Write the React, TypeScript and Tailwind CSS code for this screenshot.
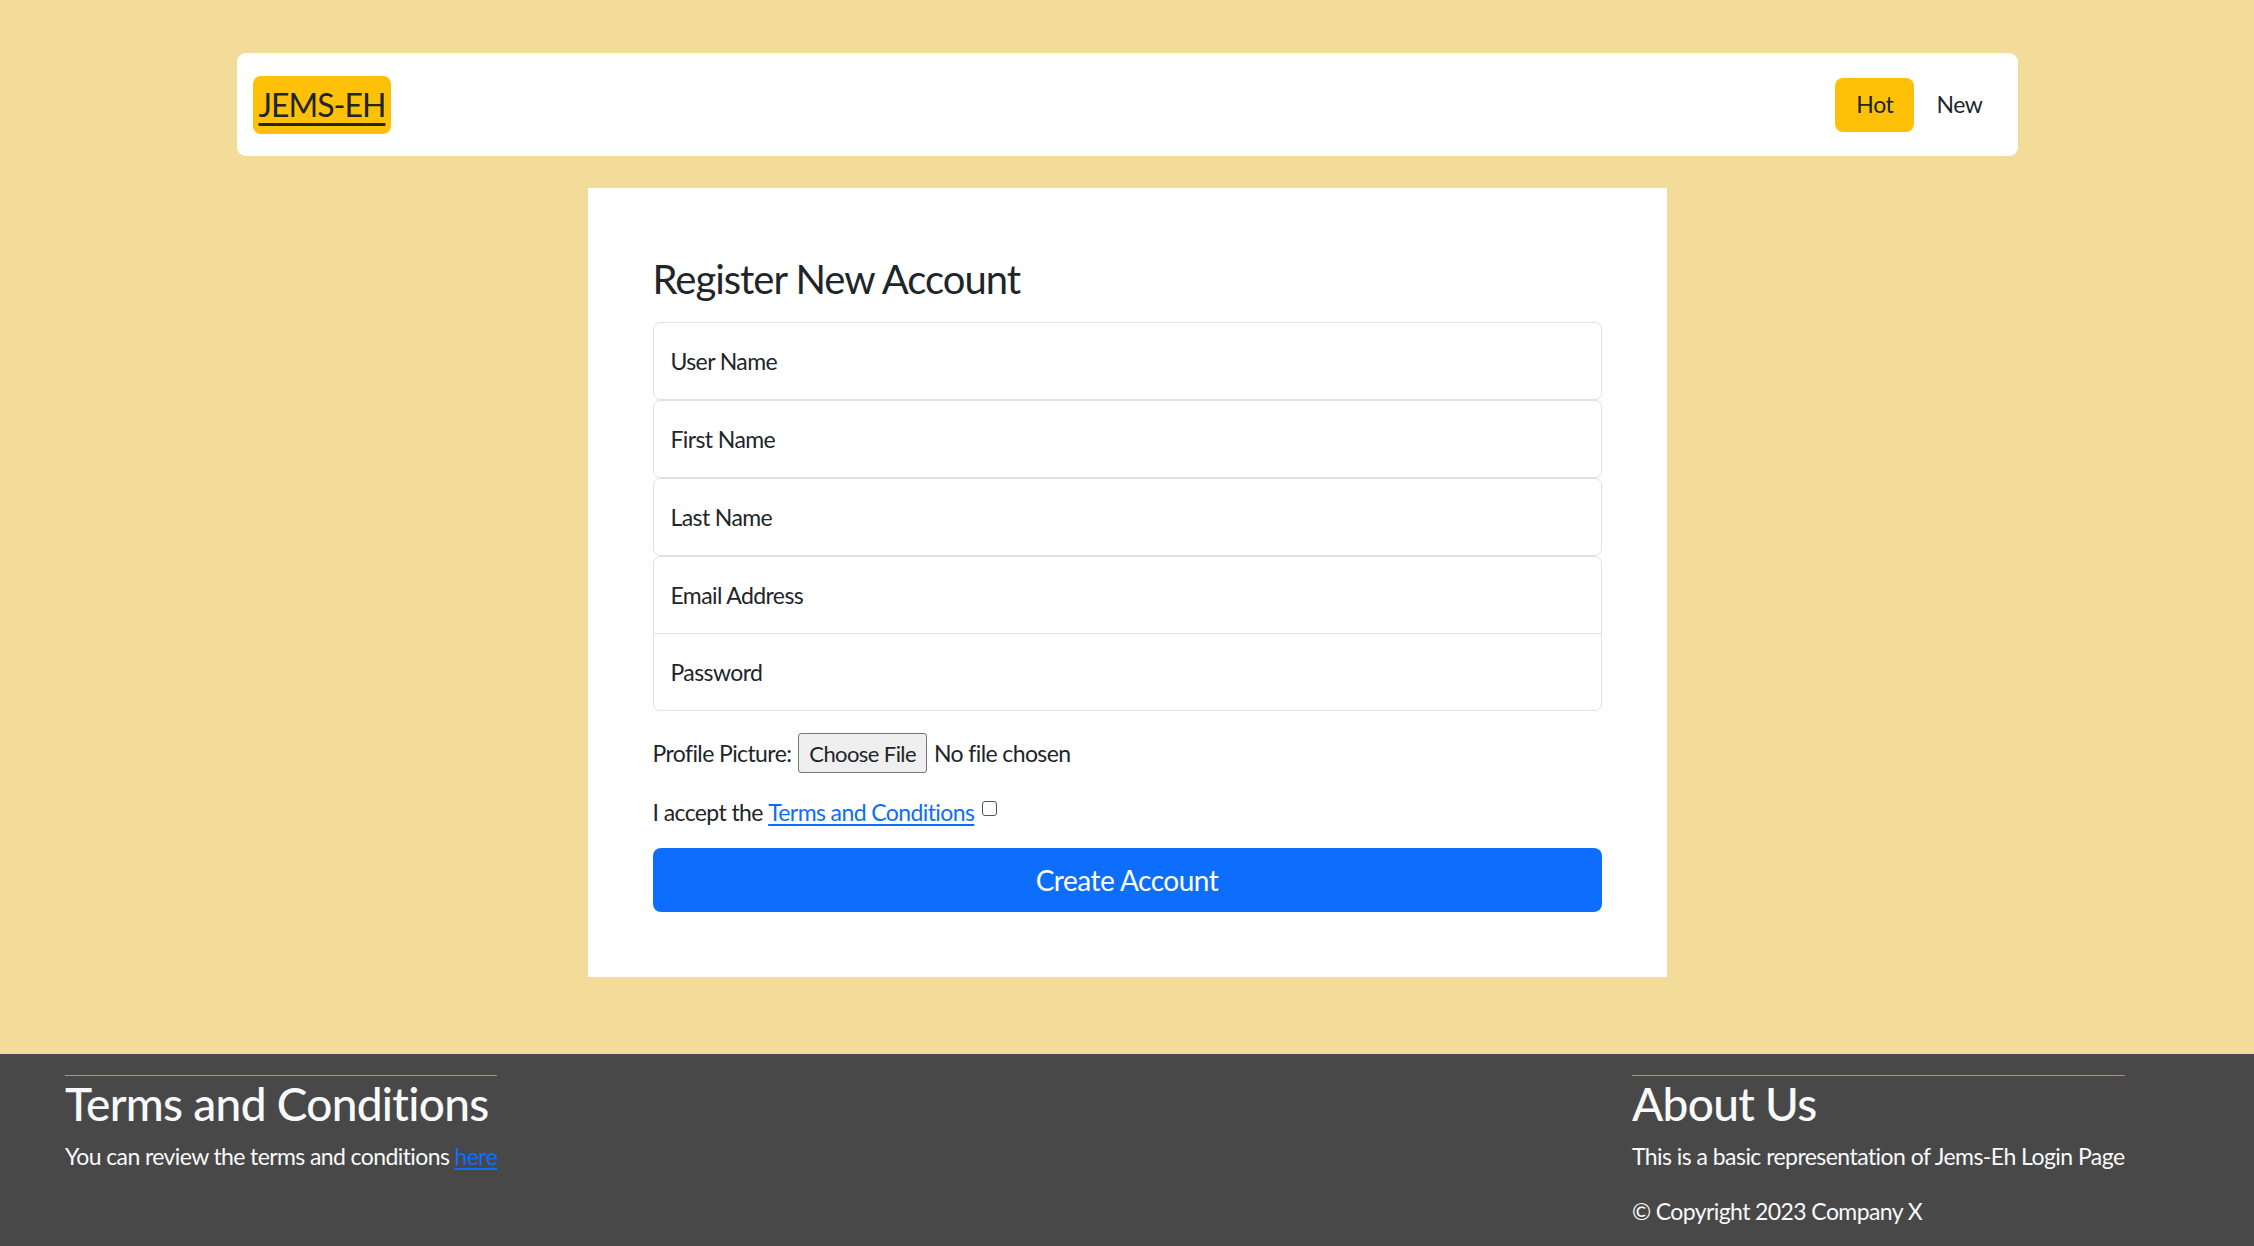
import React from "react";

const font = "font-['Lato',sans-serif]";

function Field({ label, className }: { label: string; className: string }) {
  return (
    <div className={`h-[78px] border border-[#dee2e6] bg-white flex items-center px-[17px] text-[23px] tracking-[-0.6px] text-[#212529] ${className}`}>
      {label}
    </div>
  );
}

export default function App() {
  return (
    <div className={`${font} min-h-screen flex flex-col bg-[#f3dc9a] text-[#212529]`}>
      <main className="flex-1 pt-[53px] pb-[77px]">
        <nav className="mx-auto w-[1781px] h-[103px] bg-white rounded-[9px] flex items-center justify-between pl-[16px] pr-[35px]">
          <a href="#" className="h-[58px] px-[6px] bg-[#ffc107] rounded-[8px] flex items-center text-[32px] tracking-[-1px] text-[#212529] underline decoration-[3px] underline-offset-[6px]">
            JEMS-EH
          </a>
          <div className="flex items-center gap-[22px] text-[23px] tracking-[-0.4px]">
            <span className="h-[54px] w-[79px] bg-[#ffc107] rounded-[8px] flex items-center justify-center">Hot</span>
            <span>New</span>
          </div>
        </nav>

        <div className="mx-auto mt-[32px] w-[1079px] bg-white px-[65px] pt-[67px] pb-[65px]">
          <h3 className="text-[40px] leading-[48px] tracking-[-1px] mb-[19px] text-[#212529]">Register New Account</h3>
          <div className="flex flex-col">
            <Field label="User Name" className="rounded-[7px]" />
            <Field label="First Name" className="rounded-[7px]" />
            <Field label="Last Name" className="rounded-[7px]" />
            <div className="border border-[#dee2e6] rounded-[7px] flex flex-col text-[23px] tracking-[-0.6px]">
              <div className="h-[77px] flex items-center px-[17px] border-b border-[#dee2e6]">Email Address</div>
              <div className="h-[76px] flex items-center px-[17px]">Password</div>
            </div>
          </div>

          <div className="mt-[22px] h-[40px] flex items-center text-[23px] tracking-[-0.6px]">
            <span>Profile Picture:</span>
            <span className="ml-[7px] h-[40px] px-[10px] flex items-center bg-[#efefef] border border-[#767676] rounded-[3px] text-[22px] tracking-[-0.6px]">Choose File</span>
            <span className="ml-[7px]">No file chosen</span>
          </div>

          <div className="mt-[22px] h-[34px] flex items-center text-[23px] tracking-[-0.6px]">
            <span>I accept the&nbsp;</span>
            <a href="#" className="text-[#0d6efd] underline underline-offset-[3px]">Terms and Conditions</a>
            <span className="ml-[8px] mb-[8px] w-[15px] h-[15px] border border-[#555] rounded-[3px] bg-white"></span>
          </div>

          <button className="mt-[19px] w-full h-[64px] bg-[#0d6efd] rounded-[8px] text-white text-[28px] tracking-[-0.5px] flex items-center justify-center">
            Create Account
          </button>
        </div>
      </main>

      <footer className="h-[193px] bg-[#484848] text-[#f8f9fa] grid grid-cols-[1567px_1fr] pl-[65px] pt-[21px]">
        <div>
          <div className="inline-block border-t border-[#ff8000]">
            <h2 className="text-[46px] leading-[55px] font-medium tracking-[-0.7px] mb-[8px]">Terms and Conditions</h2>
            <p className="text-[23px] leading-[34px] tracking-[-0.6px]">
              You can review the terms and conditions <a href="#" className="text-[#0d6efd] underline underline-offset-[3px]">here</a>
            </p>
          </div>
        </div>
        <div>
          <div className="inline-block border-t border-[#ff8000]">
            <h2 className="text-[46px] leading-[55px] font-medium tracking-[-0.7px] mb-[8px]">About Us</h2>
            <p className="text-[23px] leading-[34px] tracking-[-0.55px] mb-[21px]">This is a basic representation of Jems-Eh Login Page</p>
            <p className="text-[23px] leading-[34px] tracking-[-0.6px]">© Copyright 2023 Company X</p>
          </div>
        </div>
      </footer>
    </div>
  );
}
